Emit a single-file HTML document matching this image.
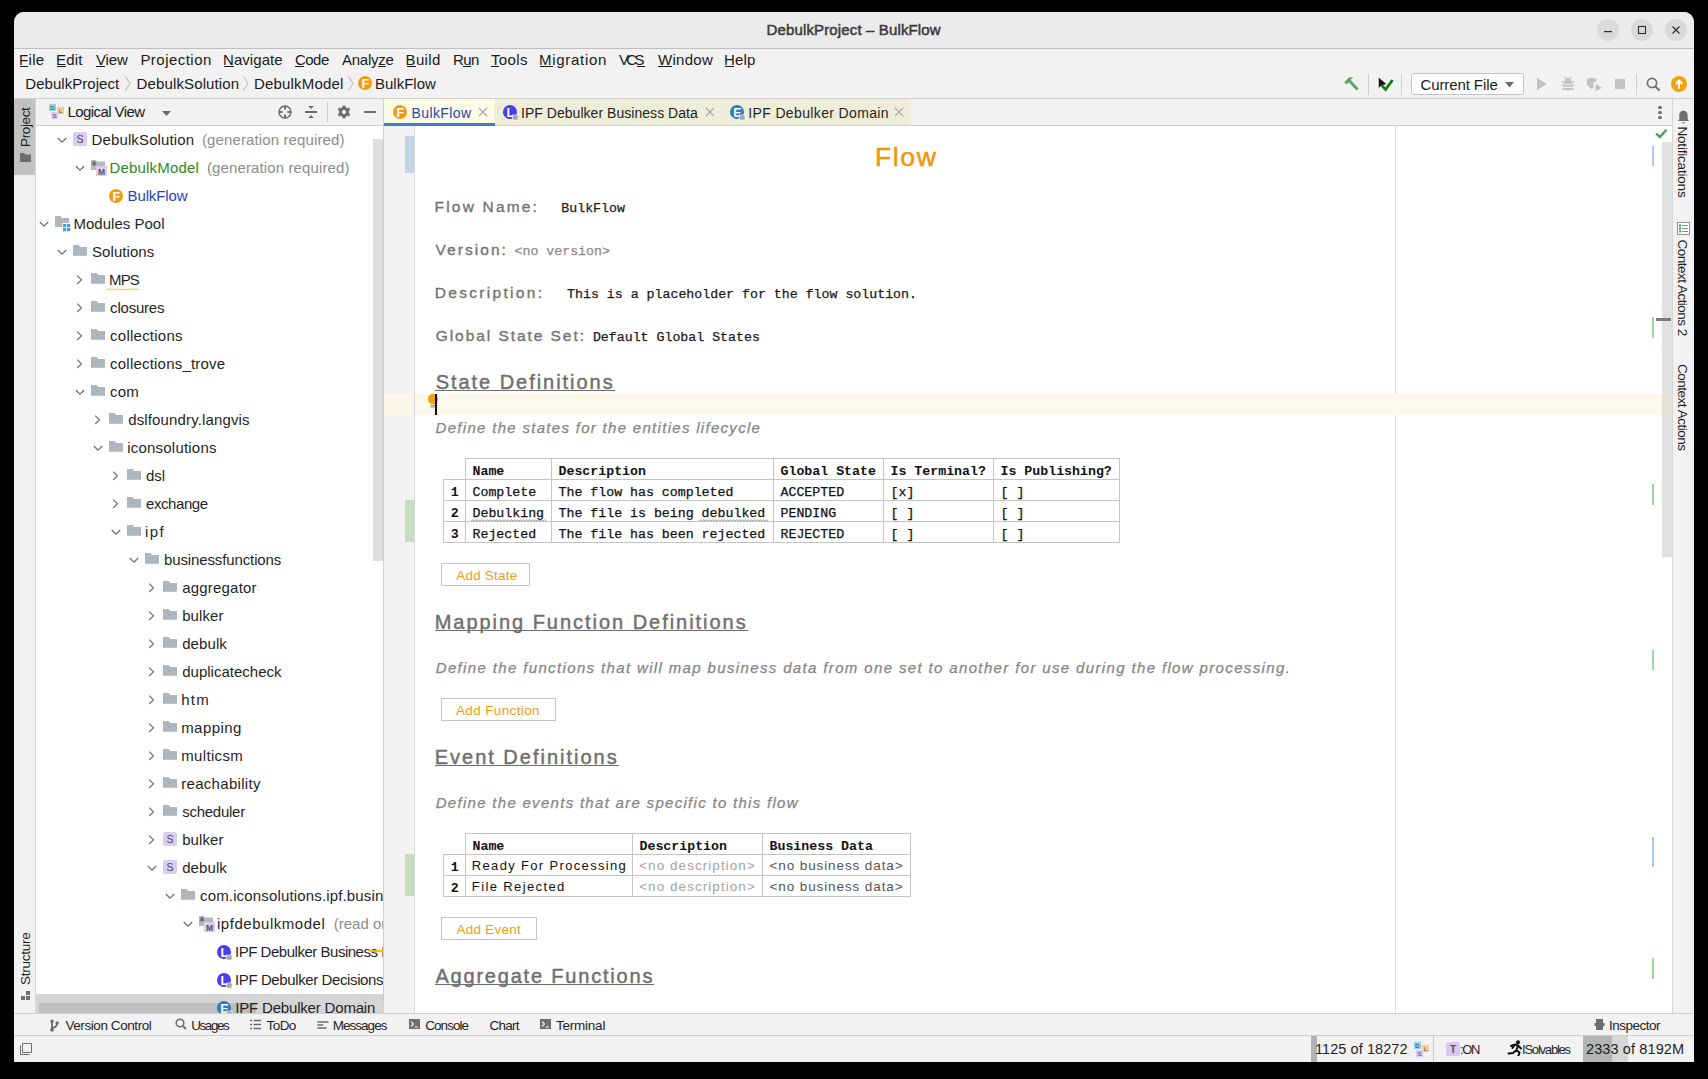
<!DOCTYPE html>
<html><head><meta charset="utf-8"><style>
html,body{margin:0;padding:0;}
body{width:1708px;height:1079px;background:#000;position:relative;overflow:hidden;font-family:"Liberation Sans",sans-serif;}
</style></head><body>
<div style="position:absolute;left:14px;top:12px;width:1680px;height:1050px;background:#f2f2f2;border-radius:10px 10px 0 0;overflow:hidden"></div>
<div style="position:absolute;left:14px;top:12px;width:1680px;height:36px;background:#ebebeb;border-radius:10px 10px 0 0"></div>
<div style="position:absolute;left:14px;top:48px;width:1680px;height:1px;background:#bebebe;"></div>
<div style="position:absolute;left:766.60px;top:22.00px;font-family:'Liberation Sans', sans-serif;font-size:15px;line-height:15px;color:#3a3a3a;font-weight:normal;font-style:normal;letter-spacing:0.136px;white-space:pre;-webkit-text-stroke:0.5px #3a3a3a;">DebulkProject – BulkFlow</div>
<svg style="position:absolute;left:1597px;top:19px;" width="22" height="22" viewBox="0 0 22 22"><circle cx="11" cy="11" r="11" fill="#dadada"/><rect x="7" y="12" width="8" height="1.2" fill="#2e2e2e"/></svg>
<svg style="position:absolute;left:1631px;top:19px;" width="22" height="22" viewBox="0 0 22 22"><circle cx="11" cy="11" r="11" fill="#dadada"/><rect x="7.5" y="7.5" width="7" height="7" fill="none" stroke="#2e2e2e" stroke-width="1.1"/></svg>
<svg style="position:absolute;left:1665px;top:19px;" width="22" height="22" viewBox="0 0 22 22"><circle cx="11" cy="11" r="11" fill="#dadada"/><path d="M7.5 7.5 L14.5 14.5 M14.5 7.5 L7.5 14.5" stroke="#2e2e2e" stroke-width="1.2"/></svg>
<div style="position:absolute;left:19.00px;top:52.00px;font-family:'Liberation Sans', sans-serif;font-size:15px;line-height:15px;color:#1a1a1a;font-weight:normal;font-style:normal;letter-spacing:0.324px;white-space:pre;">File</div>
<div style="position:absolute;left:56.00px;top:52.00px;font-family:'Liberation Sans', sans-serif;font-size:15px;line-height:15px;color:#1a1a1a;font-weight:normal;font-style:normal;letter-spacing:0.207px;white-space:pre;">Edit</div>
<div style="position:absolute;left:95.90px;top:52.00px;font-family:'Liberation Sans', sans-serif;font-size:15px;line-height:15px;color:#1a1a1a;font-weight:normal;font-style:normal;letter-spacing:-0.103px;white-space:pre;">View</div>
<div style="position:absolute;left:140.40px;top:52.00px;font-family:'Liberation Sans', sans-serif;font-size:15px;line-height:15px;color:#1a1a1a;font-weight:normal;font-style:normal;letter-spacing:0.471px;white-space:pre;">Projection</div>
<div style="position:absolute;left:223.00px;top:52.00px;font-family:'Liberation Sans', sans-serif;font-size:15px;line-height:15px;color:#1a1a1a;font-weight:normal;font-style:normal;letter-spacing:0.063px;white-space:pre;">Navigate</div>
<div style="position:absolute;left:294.90px;top:52.00px;font-family:'Liberation Sans', sans-serif;font-size:15px;line-height:15px;color:#1a1a1a;font-weight:normal;font-style:normal;letter-spacing:-0.472px;white-space:pre;">Code</div>
<div style="position:absolute;left:342.00px;top:52.00px;font-family:'Liberation Sans', sans-serif;font-size:15px;line-height:15px;color:#1a1a1a;font-weight:normal;font-style:normal;letter-spacing:-0.254px;white-space:pre;">Analyze</div>
<div style="position:absolute;left:405.60px;top:52.00px;font-family:'Liberation Sans', sans-serif;font-size:15px;line-height:15px;color:#1a1a1a;font-weight:normal;font-style:normal;letter-spacing:0.322px;white-space:pre;">Build</div>
<div style="position:absolute;left:453.00px;top:52.00px;font-family:'Liberation Sans', sans-serif;font-size:15px;line-height:15px;color:#1a1a1a;font-weight:normal;font-style:normal;letter-spacing:-0.587px;white-space:pre;">Run</div>
<div style="position:absolute;left:491.00px;top:52.00px;font-family:'Liberation Sans', sans-serif;font-size:15px;line-height:15px;color:#1a1a1a;font-weight:normal;font-style:normal;letter-spacing:0.371px;white-space:pre;">Tools</div>
<div style="position:absolute;left:539.00px;top:52.00px;font-family:'Liberation Sans', sans-serif;font-size:15px;line-height:15px;color:#1a1a1a;font-weight:normal;font-style:normal;letter-spacing:0.706px;white-space:pre;">Migration</div>
<div style="position:absolute;left:619.00px;top:52.00px;font-family:'Liberation Sans', sans-serif;font-size:15px;line-height:15px;color:#1a1a1a;font-weight:normal;font-style:normal;letter-spacing:-2.669px;white-space:pre;">VCS</div>
<div style="position:absolute;left:658.00px;top:52.00px;font-family:'Liberation Sans', sans-serif;font-size:15px;line-height:15px;color:#1a1a1a;font-weight:normal;font-style:normal;letter-spacing:0.297px;white-space:pre;">Window</div>
<div style="position:absolute;left:724.00px;top:52.00px;font-family:'Liberation Sans', sans-serif;font-size:15px;line-height:15px;color:#1a1a1a;font-weight:normal;font-style:normal;letter-spacing:0.164px;white-space:pre;">Help</div>
<div style="position:absolute;left:20px;top:66px;width:8px;height:1.2px;background:#1a1a1a;"></div>
<div style="position:absolute;left:57px;top:66px;width:9px;height:1.2px;background:#1a1a1a;"></div>
<div style="position:absolute;left:96px;top:66px;width:9px;height:1.2px;background:#1a1a1a;"></div>
<div style="position:absolute;left:224px;top:66px;width:10px;height:1.2px;background:#1a1a1a;"></div>
<div style="position:absolute;left:295px;top:66px;width:9px;height:1.2px;background:#1a1a1a;"></div>
<div style="position:absolute;left:378px;top:66px;width:8px;height:1.2px;background:#1a1a1a;"></div>
<div style="position:absolute;left:407px;top:66px;width:9px;height:1.2px;background:#1a1a1a;"></div>
<div style="position:absolute;left:463px;top:66px;width:8px;height:1.2px;background:#1a1a1a;"></div>
<div style="position:absolute;left:491px;top:66px;width:8px;height:1.2px;background:#1a1a1a;"></div>
<div style="position:absolute;left:540px;top:66px;width:13px;height:1.2px;background:#1a1a1a;"></div>
<div style="position:absolute;left:637px;top:66px;width:8px;height:1.2px;background:#1a1a1a;"></div>
<div style="position:absolute;left:658px;top:66px;width:14px;height:1.2px;background:#1a1a1a;"></div>
<div style="position:absolute;left:725px;top:66px;width:9px;height:1.2px;background:#1a1a1a;"></div>
<div style="position:absolute;left:25.30px;top:76.00px;font-family:'Liberation Sans', sans-serif;font-size:15px;line-height:15px;color:#1a1a1a;font-weight:normal;font-style:normal;letter-spacing:0.041px;white-space:pre;">DebulkProject</div>
<div style="position:absolute;left:136.60px;top:76.00px;font-family:'Liberation Sans', sans-serif;font-size:15px;line-height:15px;color:#1a1a1a;font-weight:normal;font-style:normal;letter-spacing:0.126px;white-space:pre;">DebulkSolution</div>
<div style="position:absolute;left:254.00px;top:76.00px;font-family:'Liberation Sans', sans-serif;font-size:15px;line-height:15px;color:#1a1a1a;font-weight:normal;font-style:normal;letter-spacing:0.179px;white-space:pre;">DebulkModel</div>
<div style="position:absolute;left:375.00px;top:76.00px;font-family:'Liberation Sans', sans-serif;font-size:15px;line-height:15px;color:#1a1a1a;font-weight:normal;font-style:normal;letter-spacing:-0.002px;white-space:pre;">BulkFlow</div>
<svg style="position:absolute;left:125px;top:76px;" width="6" height="15" viewBox="0 0 6 15"><path d="M0.5 0.5 L5 7.5 L0.5 14.5" fill="none" stroke="#b4b4b4" stroke-width="1"/></svg>
<svg style="position:absolute;left:243px;top:76px;" width="6" height="15" viewBox="0 0 6 15"><path d="M0.5 0.5 L5 7.5 L0.5 14.5" fill="none" stroke="#b4b4b4" stroke-width="1"/></svg>
<svg style="position:absolute;left:348px;top:76px;" width="6" height="15" viewBox="0 0 6 15"><path d="M0.5 0.5 L5 7.5 L0.5 14.5" fill="none" stroke="#b4b4b4" stroke-width="1"/></svg>
<div style="position:absolute;left:14px;top:98px;width:1680px;height:1px;background:#d0d0d0;"></div>
<div style="position:absolute;left:14px;top:99px;width:21px;height:914px;background:#f2f2f2;"></div>
<div style="position:absolute;left:14px;top:99px;width:21px;height:76px;background:#c2c2c2;"></div>
<div style="position:absolute;left:35px;top:99px;width:1px;height:914px;background:#d6d6d6;"></div>
<div style="position:absolute;left:36px;top:99px;width:347px;height:26px;background:#f2f2f2;"></div>
<div style="position:absolute;left:36px;top:125px;width:347px;height:1px;background:#d0d0d0;"></div>
<div style="position:absolute;left:67.50px;top:104.00px;font-family:'Liberation Sans', sans-serif;font-size:15px;line-height:15px;color:#1a1a1a;font-weight:normal;font-style:normal;letter-spacing:-0.574px;white-space:pre;">Logical View</div>
<svg style="position:absolute;left:162px;top:111px;" width="9" height="5" viewBox="0 0 9 5"><path d="M0 0 L9 0 L4.5 5 Z" fill="#6e6e6e"/></svg>
<div style="position:absolute;left:36px;top:126px;width:347px;height:887px;background:#ffffff;"></div>
<div style="position:absolute;left:383px;top:99px;width:1px;height:914px;background:#d0d0d0;"></div>
<div style="position:absolute;left:384px;top:99px;width:1288px;height:26px;background:#f2f2f2;"></div>
<div style="position:absolute;left:384px;top:125px;width:1288px;height:1px;background:#d0d0d0;"></div>
<div style="position:absolute;left:384px;top:99px;width:111px;height:26px;background:#fcfce6;"></div>
<div style="position:absolute;left:495px;top:99px;width:416px;height:26px;background:#eeedd8;"></div>
<div style="position:absolute;left:384px;top:123px;width:111px;height:3px;background:#3d7dd0;"></div>
<div style="position:absolute;left:384px;top:126px;width:1288px;height:887px;background:#ffffff;"></div>
<div style="position:absolute;left:384px;top:126px;width:30px;height:887px;background:#f2f2f2;"></div>
<div style="position:absolute;left:414px;top:126px;width:1px;height:887px;background:#d6d6d6;"></div>
<div style="position:absolute;left:1395px;top:126px;width:1px;height:887px;background:#dddddd;"></div>
<div style="position:absolute;left:1672px;top:99px;width:1px;height:914px;background:#d6d6d6;"></div>
<div style="position:absolute;left:1673px;top:99px;width:21px;height:914px;background:#f2f2f2;"></div>
<div style="position:absolute;left:14px;top:1013px;width:1680px;height:1px;background:#d0d0d0;"></div>
<div style="position:absolute;left:14px;top:1014px;width:1680px;height:21px;background:#f2f2f2;"></div>
<div style="position:absolute;left:14px;top:1035px;width:1680px;height:1px;background:#d0d0d0;"></div>
<div style="position:absolute;left:14px;top:1036px;width:1680px;height:26px;background:#f2f2f2;"></div>
<div style="position:absolute;left:36px;top:994px;width:347px;height:19px;background:#d5d5d5;"></div>
<div style="position:absolute;left:39px;top:1003px;width:217px;height:10px;background:#bebebe;"></div>
<div style="position:absolute;left:373px;top:139px;width:10px;height:422px;background:#dedede;"></div>
<div style="position:absolute;left:36px;top:126px;width:347px;height:887px;overflow:hidden">
<div style="position:absolute;left:-36px;top:-126px;width:1708px;height:1079px">
<svg style="position:absolute;left:57px;top:137px;" width="10" height="7" viewBox="0 0 10 7"><path d="M0.8 1 L5 5.2 L9.2 1" fill="none" stroke="#707070" stroke-width="1.3"/></svg>
<svg style="position:absolute;left:73px;top:132px;" width="14" height="14" viewBox="0 0 14 14"><rect x="0" y="0" width="14" height="14" rx="2" fill="#dccbf6"/><text x="7" y="10.8" text-anchor="middle" font-family="Liberation Sans" font-size="10.5" fill="#4a4a4a">S</text></svg>
<div style="position:absolute;left:91.50px;top:132.00px;font-family:'Liberation Sans', sans-serif;font-size:15px;line-height:15px;color:#1f1f1f;font-weight:normal;font-style:normal;letter-spacing:0.134px;white-space:pre;">DebulkSolution</div>
<svg style="position:absolute;left:75px;top:165px;" width="10" height="7" viewBox="0 0 10 7"><path d="M0.8 1 L5 5.2 L9.2 1" fill="none" stroke="#707070" stroke-width="1.3"/></svg>
<svg style="position:absolute;left:91px;top:160px;" width="16" height="16" viewBox="0 0 16 16"><path d="M0 0 H5 L6 1.5 H14 V10 H0 Z" fill="#b3b9be"/><path d="M3 1 V6 M0.8 2.2 L5.2 4.8 M5.2 2.2 L0.8 4.8" stroke="#555" stroke-width="0.9"/><rect x="5" y="6" width="11" height="10" fill="#dccbf6"/><text x="10.5" y="14.5" text-anchor="middle" font-family="Liberation Sans" font-size="8.5" font-weight="bold" fill="#555">M</text></svg>
<div style="position:absolute;left:109.50px;top:160.00px;font-family:'Liberation Sans', sans-serif;font-size:15px;line-height:15px;color:#2f8a1f;font-weight:normal;font-style:normal;letter-spacing:0.179px;white-space:pre;">DebulkModel</div>
<svg style="position:absolute;left:109px;top:189px;" width="16" height="16" viewBox="0 0 16 16"><circle cx="7" cy="7" r="7" fill="#f39c12"/><text x="7.4" y="11.6" text-anchor="middle" font-family="Liberation Sans" font-size="12.5" font-weight="bold" fill="#fff">F</text></svg>
<div style="position:absolute;left:127.50px;top:188.00px;font-family:'Liberation Sans', sans-serif;font-size:15px;line-height:15px;color:#2846b8;font-weight:normal;font-style:normal;letter-spacing:-0.102px;white-space:pre;">BulkFlow</div>
<svg style="position:absolute;left:39px;top:221px;" width="10" height="7" viewBox="0 0 10 7"><path d="M0.8 1 L5 5.2 L9.2 1" fill="none" stroke="#707070" stroke-width="1.3"/></svg>
<svg style="position:absolute;left:55px;top:216px;" width="16" height="16" viewBox="0 0 16 16"><path d="M0 0 H5.6 L7 2 H14 V11 H0 Z" fill="#adb6bd"/><rect x="7" y="7" width="9" height="9" fill="#fff"/><rect x="8" y="8" width="3.2" height="3.2" fill="#3aa1dd"/><rect x="12" y="8" width="3.2" height="3.2" fill="#3aa1dd"/><rect x="8" y="12" width="3.2" height="3.2" fill="#3aa1dd"/><rect x="12" y="12" width="3.2" height="3.2" fill="#3aa1dd"/></svg>
<div style="position:absolute;left:73.50px;top:216.00px;font-family:'Liberation Sans', sans-serif;font-size:15px;line-height:15px;color:#1f1f1f;font-weight:normal;font-style:normal;letter-spacing:0.013px;white-space:pre;">Modules Pool</div>
<svg style="position:absolute;left:57px;top:249px;" width="10" height="7" viewBox="0 0 10 7"><path d="M0.8 1 L5 5.2 L9.2 1" fill="none" stroke="#707070" stroke-width="1.3"/></svg>
<svg style="position:absolute;left:73px;top:245px;" width="14" height="11" viewBox="0 0 14 11"><path d="M0 0 H5.6 L7.2 2 H14 V10.8 H0 Z" fill="#adb6bd"/></svg>
<div style="position:absolute;left:92.00px;top:244.00px;font-family:'Liberation Sans', sans-serif;font-size:15px;line-height:15px;color:#1f1f1f;font-weight:normal;font-style:normal;letter-spacing:0.068px;white-space:pre;">Solutions</div>
<svg style="position:absolute;left:76px;top:275px;" width="7" height="10" viewBox="0 0 7 10"><path d="M1.2 0.6 L5.4 4.8 L1.2 9" fill="none" stroke="#757575" stroke-width="1.25"/></svg>
<svg style="position:absolute;left:91px;top:273px;" width="14" height="11" viewBox="0 0 14 11"><path d="M0 0 H5.6 L7.2 2 H14 V10.8 H0 Z" fill="#adb6bd"/></svg>
<div style="position:absolute;left:109.10px;top:272.00px;font-family:'Liberation Sans', sans-serif;font-size:15px;line-height:15px;color:#1f1f1f;font-weight:normal;font-style:normal;letter-spacing:-0.950px;white-space:pre;">MPS</div>
<svg style="position:absolute;left:76px;top:303px;" width="7" height="10" viewBox="0 0 7 10"><path d="M1.2 0.6 L5.4 4.8 L1.2 9" fill="none" stroke="#757575" stroke-width="1.25"/></svg>
<svg style="position:absolute;left:91px;top:301px;" width="14" height="11" viewBox="0 0 14 11"><path d="M0 0 H5.6 L7.2 2 H14 V10.8 H0 Z" fill="#adb6bd"/></svg>
<div style="position:absolute;left:110.10px;top:300.00px;font-family:'Liberation Sans', sans-serif;font-size:15px;line-height:15px;color:#1f1f1f;font-weight:normal;font-style:normal;letter-spacing:-0.208px;white-space:pre;">closures</div>
<svg style="position:absolute;left:76px;top:331px;" width="7" height="10" viewBox="0 0 7 10"><path d="M1.2 0.6 L5.4 4.8 L1.2 9" fill="none" stroke="#757575" stroke-width="1.25"/></svg>
<svg style="position:absolute;left:91px;top:329px;" width="14" height="11" viewBox="0 0 14 11"><path d="M0 0 H5.6 L7.2 2 H14 V10.8 H0 Z" fill="#adb6bd"/></svg>
<div style="position:absolute;left:110.10px;top:328.00px;font-family:'Liberation Sans', sans-serif;font-size:15px;line-height:15px;color:#1f1f1f;font-weight:normal;font-style:normal;letter-spacing:0.237px;white-space:pre;">collections</div>
<svg style="position:absolute;left:76px;top:359px;" width="7" height="10" viewBox="0 0 7 10"><path d="M1.2 0.6 L5.4 4.8 L1.2 9" fill="none" stroke="#757575" stroke-width="1.25"/></svg>
<svg style="position:absolute;left:91px;top:357px;" width="14" height="11" viewBox="0 0 14 11"><path d="M0 0 H5.6 L7.2 2 H14 V10.8 H0 Z" fill="#adb6bd"/></svg>
<div style="position:absolute;left:110.10px;top:356.00px;font-family:'Liberation Sans', sans-serif;font-size:15px;line-height:15px;color:#1f1f1f;font-weight:normal;font-style:normal;letter-spacing:0.207px;white-space:pre;">collections_trove</div>
<svg style="position:absolute;left:75px;top:389px;" width="10" height="7" viewBox="0 0 10 7"><path d="M0.8 1 L5 5.2 L9.2 1" fill="none" stroke="#707070" stroke-width="1.3"/></svg>
<svg style="position:absolute;left:91px;top:385px;" width="14" height="11" viewBox="0 0 14 11"><path d="M0 0 H5.6 L7.2 2 H14 V10.8 H0 Z" fill="#adb6bd"/></svg>
<div style="position:absolute;left:110.10px;top:384.00px;font-family:'Liberation Sans', sans-serif;font-size:15px;line-height:15px;color:#1f1f1f;font-weight:normal;font-style:normal;letter-spacing:0.129px;white-space:pre;">com</div>
<svg style="position:absolute;left:94px;top:415px;" width="7" height="10" viewBox="0 0 7 10"><path d="M1.2 0.6 L5.4 4.8 L1.2 9" fill="none" stroke="#757575" stroke-width="1.25"/></svg>
<svg style="position:absolute;left:109px;top:413px;" width="14" height="11" viewBox="0 0 14 11"><path d="M0 0 H5.6 L7.2 2 H14 V10.8 H0 Z" fill="#adb6bd"/></svg>
<div style="position:absolute;left:128.20px;top:412.00px;font-family:'Liberation Sans', sans-serif;font-size:15px;line-height:15px;color:#1f1f1f;font-weight:normal;font-style:normal;letter-spacing:0.138px;white-space:pre;">dslfoundry.langvis</div>
<svg style="position:absolute;left:93px;top:445px;" width="10" height="7" viewBox="0 0 10 7"><path d="M0.8 1 L5 5.2 L9.2 1" fill="none" stroke="#707070" stroke-width="1.3"/></svg>
<svg style="position:absolute;left:109px;top:441px;" width="14" height="11" viewBox="0 0 14 11"><path d="M0 0 H5.6 L7.2 2 H14 V10.8 H0 Z" fill="#adb6bd"/></svg>
<div style="position:absolute;left:127.20px;top:440.00px;font-family:'Liberation Sans', sans-serif;font-size:15px;line-height:15px;color:#1f1f1f;font-weight:normal;font-style:normal;letter-spacing:0.215px;white-space:pre;">iconsolutions</div>
<svg style="position:absolute;left:112px;top:471px;" width="7" height="10" viewBox="0 0 7 10"><path d="M1.2 0.6 L5.4 4.8 L1.2 9" fill="none" stroke="#757575" stroke-width="1.25"/></svg>
<svg style="position:absolute;left:127px;top:469px;" width="14" height="11" viewBox="0 0 14 11"><path d="M0 0 H5.6 L7.2 2 H14 V10.8 H0 Z" fill="#adb6bd"/></svg>
<div style="position:absolute;left:146.00px;top:468.00px;font-family:'Liberation Sans', sans-serif;font-size:15px;line-height:15px;color:#1f1f1f;font-weight:normal;font-style:normal;letter-spacing:-0.071px;white-space:pre;">dsl</div>
<svg style="position:absolute;left:112px;top:499px;" width="7" height="10" viewBox="0 0 7 10"><path d="M1.2 0.6 L5.4 4.8 L1.2 9" fill="none" stroke="#757575" stroke-width="1.25"/></svg>
<svg style="position:absolute;left:127px;top:497px;" width="14" height="11" viewBox="0 0 14 11"><path d="M0 0 H5.6 L7.2 2 H14 V10.8 H0 Z" fill="#adb6bd"/></svg>
<div style="position:absolute;left:146.00px;top:496.00px;font-family:'Liberation Sans', sans-serif;font-size:15px;line-height:15px;color:#1f1f1f;font-weight:normal;font-style:normal;letter-spacing:-0.416px;white-space:pre;">exchange</div>
<svg style="position:absolute;left:111px;top:529px;" width="10" height="7" viewBox="0 0 10 7"><path d="M0.8 1 L5 5.2 L9.2 1" fill="none" stroke="#707070" stroke-width="1.3"/></svg>
<svg style="position:absolute;left:127px;top:525px;" width="14" height="11" viewBox="0 0 14 11"><path d="M0 0 H5.6 L7.2 2 H14 V10.8 H0 Z" fill="#adb6bd"/></svg>
<div style="position:absolute;left:145.00px;top:524.00px;font-family:'Liberation Sans', sans-serif;font-size:15px;line-height:15px;color:#1f1f1f;font-weight:normal;font-style:normal;letter-spacing:1.413px;white-space:pre;">ipf</div>
<svg style="position:absolute;left:129px;top:557px;" width="10" height="7" viewBox="0 0 10 7"><path d="M0.8 1 L5 5.2 L9.2 1" fill="none" stroke="#707070" stroke-width="1.3"/></svg>
<svg style="position:absolute;left:145px;top:553px;" width="14" height="11" viewBox="0 0 14 11"><path d="M0 0 H5.6 L7.2 2 H14 V10.8 H0 Z" fill="#adb6bd"/></svg>
<div style="position:absolute;left:164.00px;top:552.00px;font-family:'Liberation Sans', sans-serif;font-size:15px;line-height:15px;color:#1f1f1f;font-weight:normal;font-style:normal;letter-spacing:-0.121px;white-space:pre;">businessfunctions</div>
<svg style="position:absolute;left:148px;top:583px;" width="7" height="10" viewBox="0 0 7 10"><path d="M1.2 0.6 L5.4 4.8 L1.2 9" fill="none" stroke="#757575" stroke-width="1.25"/></svg>
<svg style="position:absolute;left:163px;top:581px;" width="14" height="11" viewBox="0 0 14 11"><path d="M0 0 H5.6 L7.2 2 H14 V10.8 H0 Z" fill="#adb6bd"/></svg>
<div style="position:absolute;left:182.20px;top:580.00px;font-family:'Liberation Sans', sans-serif;font-size:15px;line-height:15px;color:#1f1f1f;font-weight:normal;font-style:normal;letter-spacing:0.205px;white-space:pre;">aggregator</div>
<svg style="position:absolute;left:148px;top:611px;" width="7" height="10" viewBox="0 0 7 10"><path d="M1.2 0.6 L5.4 4.8 L1.2 9" fill="none" stroke="#757575" stroke-width="1.25"/></svg>
<svg style="position:absolute;left:163px;top:609px;" width="14" height="11" viewBox="0 0 14 11"><path d="M0 0 H5.6 L7.2 2 H14 V10.8 H0 Z" fill="#adb6bd"/></svg>
<div style="position:absolute;left:182.20px;top:608.00px;font-family:'Liberation Sans', sans-serif;font-size:15px;line-height:15px;color:#1f1f1f;font-weight:normal;font-style:normal;letter-spacing:0.088px;white-space:pre;">bulker</div>
<svg style="position:absolute;left:148px;top:639px;" width="7" height="10" viewBox="0 0 7 10"><path d="M1.2 0.6 L5.4 4.8 L1.2 9" fill="none" stroke="#757575" stroke-width="1.25"/></svg>
<svg style="position:absolute;left:163px;top:637px;" width="14" height="11" viewBox="0 0 14 11"><path d="M0 0 H5.6 L7.2 2 H14 V10.8 H0 Z" fill="#adb6bd"/></svg>
<div style="position:absolute;left:182.20px;top:636.00px;font-family:'Liberation Sans', sans-serif;font-size:15px;line-height:15px;color:#1f1f1f;font-weight:normal;font-style:normal;letter-spacing:0.080px;white-space:pre;">debulk</div>
<svg style="position:absolute;left:148px;top:667px;" width="7" height="10" viewBox="0 0 7 10"><path d="M1.2 0.6 L5.4 4.8 L1.2 9" fill="none" stroke="#757575" stroke-width="1.25"/></svg>
<svg style="position:absolute;left:163px;top:665px;" width="14" height="11" viewBox="0 0 14 11"><path d="M0 0 H5.6 L7.2 2 H14 V10.8 H0 Z" fill="#adb6bd"/></svg>
<div style="position:absolute;left:182.20px;top:664.00px;font-family:'Liberation Sans', sans-serif;font-size:15px;line-height:15px;color:#1f1f1f;font-weight:normal;font-style:normal;letter-spacing:0.013px;white-space:pre;">duplicatecheck</div>
<svg style="position:absolute;left:148px;top:695px;" width="7" height="10" viewBox="0 0 7 10"><path d="M1.2 0.6 L5.4 4.8 L1.2 9" fill="none" stroke="#757575" stroke-width="1.25"/></svg>
<svg style="position:absolute;left:163px;top:693px;" width="14" height="11" viewBox="0 0 14 11"><path d="M0 0 H5.6 L7.2 2 H14 V10.8 H0 Z" fill="#adb6bd"/></svg>
<div style="position:absolute;left:181.20px;top:692.00px;font-family:'Liberation Sans', sans-serif;font-size:15px;line-height:15px;color:#1f1f1f;font-weight:normal;font-style:normal;letter-spacing:1.295px;white-space:pre;">htm</div>
<svg style="position:absolute;left:148px;top:723px;" width="7" height="10" viewBox="0 0 7 10"><path d="M1.2 0.6 L5.4 4.8 L1.2 9" fill="none" stroke="#757575" stroke-width="1.25"/></svg>
<svg style="position:absolute;left:163px;top:721px;" width="14" height="11" viewBox="0 0 14 11"><path d="M0 0 H5.6 L7.2 2 H14 V10.8 H0 Z" fill="#adb6bd"/></svg>
<div style="position:absolute;left:181.20px;top:720.00px;font-family:'Liberation Sans', sans-serif;font-size:15px;line-height:15px;color:#1f1f1f;font-weight:normal;font-style:normal;letter-spacing:0.434px;white-space:pre;">mapping</div>
<svg style="position:absolute;left:148px;top:751px;" width="7" height="10" viewBox="0 0 7 10"><path d="M1.2 0.6 L5.4 4.8 L1.2 9" fill="none" stroke="#757575" stroke-width="1.25"/></svg>
<svg style="position:absolute;left:163px;top:749px;" width="14" height="11" viewBox="0 0 14 11"><path d="M0 0 H5.6 L7.2 2 H14 V10.8 H0 Z" fill="#adb6bd"/></svg>
<div style="position:absolute;left:181.20px;top:748.00px;font-family:'Liberation Sans', sans-serif;font-size:15px;line-height:15px;color:#1f1f1f;font-weight:normal;font-style:normal;letter-spacing:0.347px;white-space:pre;">multicsm</div>
<svg style="position:absolute;left:148px;top:779px;" width="7" height="10" viewBox="0 0 7 10"><path d="M1.2 0.6 L5.4 4.8 L1.2 9" fill="none" stroke="#757575" stroke-width="1.25"/></svg>
<svg style="position:absolute;left:163px;top:777px;" width="14" height="11" viewBox="0 0 14 11"><path d="M0 0 H5.6 L7.2 2 H14 V10.8 H0 Z" fill="#adb6bd"/></svg>
<div style="position:absolute;left:181.20px;top:776.00px;font-family:'Liberation Sans', sans-serif;font-size:15px;line-height:15px;color:#1f1f1f;font-weight:normal;font-style:normal;letter-spacing:0.312px;white-space:pre;">reachability</div>
<svg style="position:absolute;left:148px;top:807px;" width="7" height="10" viewBox="0 0 7 10"><path d="M1.2 0.6 L5.4 4.8 L1.2 9" fill="none" stroke="#757575" stroke-width="1.25"/></svg>
<svg style="position:absolute;left:163px;top:805px;" width="14" height="11" viewBox="0 0 14 11"><path d="M0 0 H5.6 L7.2 2 H14 V10.8 H0 Z" fill="#adb6bd"/></svg>
<div style="position:absolute;left:182.20px;top:804.00px;font-family:'Liberation Sans', sans-serif;font-size:15px;line-height:15px;color:#1f1f1f;font-weight:normal;font-style:normal;letter-spacing:-0.255px;white-space:pre;">scheduler</div>
<svg style="position:absolute;left:148px;top:835px;" width="7" height="10" viewBox="0 0 7 10"><path d="M1.2 0.6 L5.4 4.8 L1.2 9" fill="none" stroke="#757575" stroke-width="1.25"/></svg>
<svg style="position:absolute;left:163px;top:832px;" width="14" height="14" viewBox="0 0 14 14"><rect x="0" y="0" width="14" height="14" rx="2" fill="#dccbf6"/><text x="7" y="10.8" text-anchor="middle" font-family="Liberation Sans" font-size="10.5" fill="#4a4a4a">S</text></svg>
<div style="position:absolute;left:182.20px;top:832.00px;font-family:'Liberation Sans', sans-serif;font-size:15px;line-height:15px;color:#1f1f1f;font-weight:normal;font-style:normal;letter-spacing:0.088px;white-space:pre;">bulker</div>
<svg style="position:absolute;left:147px;top:865px;" width="10" height="7" viewBox="0 0 10 7"><path d="M0.8 1 L5 5.2 L9.2 1" fill="none" stroke="#707070" stroke-width="1.3"/></svg>
<svg style="position:absolute;left:163px;top:860px;" width="14" height="14" viewBox="0 0 14 14"><rect x="0" y="0" width="14" height="14" rx="2" fill="#dccbf6"/><text x="7" y="10.8" text-anchor="middle" font-family="Liberation Sans" font-size="10.5" fill="#4a4a4a">S</text></svg>
<div style="position:absolute;left:182.20px;top:860.00px;font-family:'Liberation Sans', sans-serif;font-size:15px;line-height:15px;color:#1f1f1f;font-weight:normal;font-style:normal;letter-spacing:0.080px;white-space:pre;">debulk</div>
<svg style="position:absolute;left:165px;top:893px;" width="10" height="7" viewBox="0 0 10 7"><path d="M0.8 1 L5 5.2 L9.2 1" fill="none" stroke="#707070" stroke-width="1.3"/></svg>
<svg style="position:absolute;left:181px;top:889px;" width="14" height="11" viewBox="0 0 14 11"><path d="M0 0 H5.6 L7.2 2 H14 V10.8 H0 Z" fill="#adb6bd"/></svg>
<div style="position:absolute;left:200.00px;top:888.00px;font-family:'Liberation Sans', sans-serif;font-size:15px;line-height:15px;color:#1f1f1f;font-weight:normal;font-style:normal;letter-spacing:0.157px;white-space:pre;">com.iconsolutions.ipf.businessfunctions</div>
<svg style="position:absolute;left:183px;top:921px;" width="10" height="7" viewBox="0 0 10 7"><path d="M0.8 1 L5 5.2 L9.2 1" fill="none" stroke="#707070" stroke-width="1.3"/></svg>
<svg style="position:absolute;left:199px;top:916px;" width="16" height="16" viewBox="0 0 16 16"><path d="M0 0 H5 L6 1.5 H14 V10 H0 Z" fill="#b3b9be"/><path d="M3 1 V6 M0.8 2.2 L5.2 4.8 M5.2 2.2 L0.8 4.8" stroke="#555" stroke-width="0.9"/><rect x="5" y="6" width="11" height="10" fill="#dccbf6"/><text x="10.5" y="14.5" text-anchor="middle" font-family="Liberation Sans" font-size="8.5" font-weight="bold" fill="#555">M</text></svg>
<div style="position:absolute;left:217.00px;top:916.00px;font-family:'Liberation Sans', sans-serif;font-size:15px;line-height:15px;color:#1f1f1f;font-weight:normal;font-style:normal;letter-spacing:0.533px;white-space:pre;">ipfdebulkmodel</div>
<svg style="position:absolute;left:217px;top:945px;" width="16" height="16" viewBox="0 0 16 16"><circle cx="7" cy="7" r="7" fill="#4a3cf2"/><text x="7.4" y="11.6" text-anchor="middle" font-family="Liberation Sans" font-size="12.5" font-weight="bold" fill="#fff">L</text><rect x="9.5" y="10" width="5.5" height="5" fill="#a0a6ab" stroke="#fff" stroke-width="0.6"/></svg>
<div style="position:absolute;left:235.00px;top:944.00px;font-family:'Liberation Sans', sans-serif;font-size:15px;line-height:15px;color:#1f1f1f;font-weight:normal;font-style:normal;letter-spacing:-0.478px;white-space:pre;">IPF Debulker Business Data</div>
<svg style="position:absolute;left:217px;top:973px;" width="16" height="16" viewBox="0 0 16 16"><circle cx="7" cy="7" r="7" fill="#4a3cf2"/><text x="7.4" y="11.6" text-anchor="middle" font-family="Liberation Sans" font-size="12.5" font-weight="bold" fill="#fff">L</text><rect x="9.5" y="10" width="5.5" height="5" fill="#a0a6ab" stroke="#fff" stroke-width="0.6"/></svg>
<div style="position:absolute;left:235.00px;top:972.00px;font-family:'Liberation Sans', sans-serif;font-size:15px;line-height:15px;color:#1f1f1f;font-weight:normal;font-style:normal;letter-spacing:-0.392px;white-space:pre;">IPF Debulker Decisions</div>
<svg style="position:absolute;left:217px;top:1001px;" width="16" height="16" viewBox="0 0 16 16"><circle cx="7" cy="7" r="7" fill="#2d7bc6"/><text x="7.4" y="11.6" text-anchor="middle" font-family="Liberation Sans" font-size="12.5" font-weight="bold" fill="#fff">E</text><rect x="9.5" y="10" width="5.5" height="5" fill="#a0a6ab" stroke="#fff" stroke-width="0.6"/></svg>
<div style="position:absolute;left:235.25px;top:1000.00px;font-family:'Liberation Sans', sans-serif;font-size:15px;line-height:15px;color:#1f1f1f;font-weight:normal;font-style:normal;letter-spacing:-0.183px;white-space:pre;">IPF Debulker Domain</div>
<div style="position:absolute;left:202.00px;top:132.00px;font-family:'Liberation Sans', sans-serif;font-size:15px;line-height:15px;color:#8c8c8c;font-weight:normal;font-style:normal;letter-spacing:0.121px;white-space:pre;">(generation required)</div>
<div style="position:absolute;left:207.00px;top:160.00px;font-family:'Liberation Sans', sans-serif;font-size:15px;line-height:15px;color:#8c8c8c;font-weight:normal;font-style:normal;letter-spacing:0.121px;white-space:pre;">(generation required)</div>
<div style="position:absolute;left:333.75px;top:916.00px;font-family:'Liberation Sans', sans-serif;font-size:15px;line-height:15px;color:#8c8c8c;font-weight:normal;font-style:normal;white-space:pre;">(read only)</div>
</div></div>
<svg style="position:absolute;left:106px;top:288px;" width="35" height="3.5" viewBox="0 0 35 3.5"><path d="M0 2.2 L1.5 0.6 L3 2.2 L4.5 0.6 L6 2.2 L7.5 0.6 L9 2.2 L10.5 0.6 L12 2.2 L13.5 0.6 L15 2.2 L16.5 0.6 L18 2.2 L19.5 0.6 L21 2.2 L22.5 0.6 L24 2.2 L25.5 0.6 L27 2.2 L28.5 0.6 L30 2.2 L31.5 0.6 L33 2.2" fill="none" stroke="#e6c01a" stroke-width="0.9"/></svg>
<div style="position:absolute;left:369px;top:950px;width:14px;height:1.5px;background:#e6c01a;"></div>
<svg style="position:absolute;left:49px;top:104px;" width="16" height="16" viewBox="0 0 16 16"><rect x="0" y="0" width="7" height="7" fill="#8fd0ea"/><rect x="8" y="3" width="7" height="7" fill="#f6cf8a"/><rect x="2" y="8" width="7" height="7" fill="#d9c8f5"/><text x="3.5" y="6" text-anchor="middle" font-family="Liberation Sans" font-size="6" fill="#444">D</text><text x="11.5" y="9" text-anchor="middle" font-family="Liberation Sans" font-size="6" fill="#444">L</text><text x="5.5" y="14" text-anchor="middle" font-family="Liberation Sans" font-size="6" fill="#444">S</text></svg>
<svg style="position:absolute;left:278px;top:105px;" width="14" height="14" viewBox="0 0 14 14"><circle cx="7" cy="7" r="6" fill="none" stroke="#6e6e6e" stroke-width="1.5"/><path d="M7 1 V4.6 M7 9.4 V13 M1 7 H4.6 M9.4 7 H13" stroke="#6e6e6e" stroke-width="2"/></svg>
<svg style="position:absolute;left:304px;top:105px;" width="14" height="14" viewBox="0 0 14 14"><path d="M1 7 H13" stroke="#6e6e6e" stroke-width="2"/><path d="M4 1 H10 L7 4 Z M4 13 H10 L7 10 Z" fill="#6e6e6e"/></svg>
<div style="position:absolute;left:327px;top:102px;width:1px;height:20px;background:#d0d0d0;"></div>
<svg style="position:absolute;left:337px;top:105px;" width="14" height="14" viewBox="0 0 14 14"><path d="M4.50 2.67 L5.58 2.21 L5.68 0.53 L8.32 0.53 L8.42 2.21 L9.50 2.67 L10.44 3.37 L11.94 2.62 L13.26 4.91 L11.86 5.83 L12.00 7.00 L11.86 8.17 L13.26 9.09 L11.94 11.38 L10.44 10.63 L9.50 11.33 L8.42 11.79 L8.32 13.47 L5.68 13.47 L5.58 11.79 L4.50 11.33 L3.56 10.63 L2.06 11.38 L0.74 9.09 L2.14 8.17 L2.00 7.00 L2.14 5.83 L0.74 4.91 L2.06 2.62 L3.56 3.37 Z" fill="#6e6e6e"/><circle cx="7" cy="7" r="2.1" fill="#f2f2f2"/></svg>
<div style="position:absolute;left:364px;top:111px;width:12px;height:1.5px;background:#6e6e6e;"></div>
<div style="position:absolute;left:14px;top:99px;width:21px;height:76px;overflow:hidden"></div>
<div style="position:absolute;left:14px;top:146.2px;width:0;height:0;transform:rotate(-90deg);transform-origin:0 0">
<div style="position:absolute;left:-1.00px;top:4.75px;font-family:'Liberation Sans', sans-serif;font-size:13.5px;line-height:13.5px;color:#1f1f1f;font-weight:normal;font-style:normal;letter-spacing:-0.361px;white-space:pre;">Project</div>
</div>
<svg style="position:absolute;left:20px;top:153px;" width="11" height="9" viewBox="0 0 11 9"><path d="M0 0 H4.2 L5.6 1.6 H11 V9 H0 Z" fill="#6e6e6e"/></svg>
<div style="position:absolute;left:14px;top:984.8px;width:0;height:0;transform:rotate(-90deg);transform-origin:0 0">
<div style="position:absolute;left:0.00px;top:4.75px;font-family:'Liberation Sans', sans-serif;font-size:13.5px;line-height:13.5px;color:#1f1f1f;font-weight:normal;font-style:normal;letter-spacing:-0.245px;white-space:pre;">Structure</div>
</div>
<svg style="position:absolute;left:21px;top:991px;" width="10" height="10" viewBox="0 0 10 10"><rect x="5" y="0" width="4" height="4" fill="#6e6e6e"/><rect x="0" y="5" width="4" height="4" fill="#6e6e6e"/><rect x="5" y="5" width="4" height="4" fill="#6e6e6e"/></svg>
<svg style="position:absolute;left:393px;top:105px;" width="16" height="16" viewBox="0 0 16 16"><circle cx="7" cy="7" r="7" fill="#f39c12"/><text x="7.4" y="11.6" text-anchor="middle" font-family="Liberation Sans" font-size="12.5" font-weight="bold" fill="#fff">F</text></svg>
<div style="position:absolute;left:411.50px;top:106.00px;font-family:'Liberation Sans', sans-serif;font-size:14px;line-height:14px;color:#2846b8;font-weight:normal;font-style:normal;letter-spacing:0.402px;white-space:pre;">BulkFlow</div>
<svg style="position:absolute;left:478px;top:107px;" width="10" height="10" viewBox="0 0 10 10"><path d="M1 1 L9 9 M9 1 L1 9" stroke="#a8a8a8" stroke-width="1.1"/></svg>
<svg style="position:absolute;left:503px;top:105px;" width="16" height="16" viewBox="0 0 16 16"><circle cx="7" cy="7" r="7" fill="#4a3cf2"/><text x="7.4" y="11.6" text-anchor="middle" font-family="Liberation Sans" font-size="12.5" font-weight="bold" fill="#fff">L</text><rect x="9.5" y="10" width="5.5" height="5" fill="#a0a6ab" stroke="#fff" stroke-width="0.6"/></svg>
<div style="position:absolute;left:521.00px;top:106.00px;font-family:'Liberation Sans', sans-serif;font-size:14px;line-height:14px;color:#1f1f1f;font-weight:normal;font-style:normal;letter-spacing:0.037px;white-space:pre;">IPF Debulker Business Data</div>
<svg style="position:absolute;left:705px;top:107px;" width="10" height="10" viewBox="0 0 10 10"><path d="M1 1 L9 9 M9 1 L1 9" stroke="#a8a8a8" stroke-width="1.1"/></svg>
<svg style="position:absolute;left:730px;top:105px;" width="16" height="16" viewBox="0 0 16 16"><circle cx="7" cy="7" r="7" fill="#2d7bc6"/><text x="7.4" y="11.6" text-anchor="middle" font-family="Liberation Sans" font-size="12.5" font-weight="bold" fill="#fff">E</text><rect x="9.5" y="10" width="5.5" height="5" fill="#a0a6ab" stroke="#fff" stroke-width="0.6"/></svg>
<div style="position:absolute;left:748.30px;top:106.00px;font-family:'Liberation Sans', sans-serif;font-size:14px;line-height:14px;color:#1f1f1f;font-weight:normal;font-style:normal;letter-spacing:0.359px;white-space:pre;">IPF Debulker Domain</div>
<svg style="position:absolute;left:894px;top:107px;" width="10" height="10" viewBox="0 0 10 10"><path d="M1 1 L9 9 M9 1 L1 9" stroke="#a8a8a8" stroke-width="1.1"/></svg>
<div style="position:absolute;left:1658px;top:105.5px;width:3.5px;height:3.5px;border-radius:50%;background:#6e6e6e"></div>
<div style="position:absolute;left:1658px;top:110.5px;width:3.5px;height:3.5px;border-radius:50%;background:#6e6e6e"></div>
<div style="position:absolute;left:1658px;top:115.5px;width:3.5px;height:3.5px;border-radius:50%;background:#6e6e6e"></div>
<svg style="position:absolute;left:1343px;top:76px;" width="18" height="16" viewBox="0 0 18 16"><path d="M1.2 6.3 L6.2 1.2 L10.2 1.2 L7.6 3.9 L3.6 8.6 Z" fill="#59a869"/><path d="M6.2 4.5 L14.6 13.6" stroke="#59a869" stroke-width="3"/></svg>
<div style="position:absolute;left:1368px;top:74px;width:1px;height:21px;background:#cfcfcf;"></div>
<svg style="position:absolute;left:1377px;top:76px;" width="18" height="16" viewBox="0 0 18 16"><path d="M1.5 1.2 L1.5 12.5 L4.2 9.8 L9.8 8.2 Z" fill="#111" stroke="#fff" stroke-width="0.5"/><path d="M4.6 9.2 L8.6 13.6 L15.5 4" fill="none" stroke="#0b7d0b" stroke-width="2.7"/></svg>
<div style="position:absolute;left:1401px;top:74px;width:1px;height:21px;background:#cfcfcf;"></div>
<div style="position:absolute;left:1411px;top:73px;width:111px;height:20px;border:1px solid #c4c4c4;border-radius:3px;background:#fff"></div>
<div style="position:absolute;left:1420.40px;top:77.00px;font-family:'Liberation Sans', sans-serif;font-size:15px;line-height:15px;color:#1a1a1a;font-weight:normal;font-style:normal;letter-spacing:-0.092px;white-space:pre;">Current File</div>
<svg style="position:absolute;left:1505px;top:82px;" width="9" height="6" viewBox="0 0 9 6"><path d="M0 0 H9 L4.5 5.5 Z" fill="#6e6e6e"/></svg>
<svg style="position:absolute;left:1536px;top:77px;" width="12" height="14" viewBox="0 0 12 14"><path d="M1 1 L11 7 L1 13 Z" fill="#c2c2c2"/></svg>
<svg style="position:absolute;left:1561px;top:76px;" width="14" height="16" viewBox="0 0 14 16"><path d="M3.8 1 L5.2 3 M10.2 1 L8.8 3" stroke="#c2c2c2" stroke-width="1.3"/><circle cx="7" cy="4.3" r="2.6" fill="#c2c2c2"/><ellipse cx="7" cy="9.6" rx="4.3" ry="5" fill="#c2c2c2"/><path d="M0.8 5.8 H13.2 M0.8 9.4 H13.2 M0.8 13 H13.2" stroke="#c2c2c2" stroke-width="1.3"/><path d="M3.6 8.2 H10.4 M3.6 11.4 H10.4" stroke="#f2f2f2" stroke-width="1.1"/></svg>
<svg style="position:absolute;left:1586px;top:77px;" width="17" height="16" viewBox="0 0 17 16"><path d="M1 1.8 L6 0.8 L10.5 1.8 V5 L7.5 5 L7.5 11 L5.5 12 L1 8 Z" fill="#c2c2c2"/><path d="M9.5 7 L16 10.8 L9.5 14.6 Z" fill="#c2c2c2"/></svg>
<div style="position:absolute;left:1615px;top:79px;width:10px;height:10px;background:#c2c2c2;"></div>
<div style="position:absolute;left:1636px;top:74px;width:1px;height:21px;background:#cfcfcf;"></div>
<svg style="position:absolute;left:1646px;top:77px;" width="15" height="15" viewBox="0 0 15 15"><circle cx="6" cy="6" r="4.6" fill="none" stroke="#6e6e6e" stroke-width="1.7"/><path d="M9.3 9.3 L13.5 13.5" stroke="#6e6e6e" stroke-width="1.9"/></svg>
<svg style="position:absolute;left:1671px;top:76px;" width="16" height="16" viewBox="0 0 16 16"><circle cx="8" cy="8" r="8" fill="#f0a30a"/><path d="M8 12.5 V5 M4.8 8 L8 4.5 L11.2 8" fill="none" stroke="#fff" stroke-width="2"/></svg>
<svg style="position:absolute;left:358px;top:76px;" width="16" height="16" viewBox="0 0 16 16"><circle cx="7" cy="7" r="7" fill="#f39c12"/><text x="7.4" y="11.6" text-anchor="middle" font-family="Liberation Sans" font-size="12.5" font-weight="bold" fill="#fff">F</text></svg>
<div style="position:absolute;left:405px;top:136px;width:9px;height:37px;background:#c2d5e8;"></div>
<div style="position:absolute;left:405px;top:500px;width:9px;height:42px;background:#c7ddc0;"></div>
<div style="position:absolute;left:405px;top:854px;width:9px;height:42px;background:#c7ddc0;"></div>
<div style="position:absolute;left:384px;top:394px;width:30px;height:21px;background:#fbf8e9;"></div>
<div style="position:absolute;left:415px;top:394px;width:1257px;height:21px;background:#fbf9ec;"></div>
<div style="position:absolute;left:875.00px;top:143.75px;font-family:'Liberation Sans', sans-serif;font-size:26.5px;line-height:26.5px;color:#f0960a;font-weight:normal;font-style:normal;letter-spacing:1.629px;white-space:pre;-webkit-text-stroke:0.5px #f0960a;">Flow</div>
<div style="position:absolute;left:434.60px;top:198.75px;font-family:'Liberation Sans', sans-serif;font-size:15.5px;line-height:15.5px;color:#737373;font-weight:normal;font-style:normal;letter-spacing:2.180px;white-space:pre;-webkit-text-stroke:0.35px #737373">Flow Name:</div>
<div style="position:absolute;left:561.30px;top:201.88px;font-family:'Liberation Mono', monospace;font-size:13.25px;line-height:13.25px;color:#1a1a1a;font-weight:normal;font-style:normal;white-space:pre;-webkit-text-stroke:0.25px #1a1a1a;">BulkFlow</div>
<div style="position:absolute;left:435.60px;top:241.75px;font-family:'Liberation Sans', sans-serif;font-size:15.5px;line-height:15.5px;color:#737373;font-weight:normal;font-style:normal;letter-spacing:2.043px;white-space:pre;-webkit-text-stroke:0.35px #737373">Version:</div>
<div style="position:absolute;left:514.50px;top:244.88px;font-family:'Liberation Mono', monospace;font-size:13.25px;line-height:13.25px;color:#8a8a8a;font-weight:normal;font-style:normal;white-space:pre;-webkit-text-stroke:0.25px #8a8a8a;">&lt;no version&gt;</div>
<div style="position:absolute;left:434.70px;top:284.75px;font-family:'Liberation Sans', sans-serif;font-size:15.5px;line-height:15.5px;color:#737373;font-weight:normal;font-style:normal;letter-spacing:2.315px;white-space:pre;-webkit-text-stroke:0.35px #737373">Description:</div>
<div style="position:absolute;left:567.10px;top:287.88px;font-family:'Liberation Mono', monospace;font-size:13.25px;line-height:13.25px;color:#1a1a1a;font-weight:normal;font-style:normal;white-space:pre;-webkit-text-stroke:0.25px #1a1a1a;">This is a placeholder for the flow solution.</div>
<div style="position:absolute;left:435.70px;top:327.75px;font-family:'Liberation Sans', sans-serif;font-size:15.5px;line-height:15.5px;color:#737373;font-weight:normal;font-style:normal;letter-spacing:1.945px;white-space:pre;-webkit-text-stroke:0.35px #737373">Global State Set:</div>
<div style="position:absolute;left:592.90px;top:330.88px;font-family:'Liberation Mono', monospace;font-size:13.25px;line-height:13.25px;color:#1a1a1a;font-weight:normal;font-style:normal;white-space:pre;-webkit-text-stroke:0.25px #1a1a1a;">Default Global States</div>
<div style="position:absolute;left:435.70px;top:372.00px;font-family:'Liberation Sans', sans-serif;font-size:20px;line-height:20px;color:#6f6f6f;font-weight:normal;font-style:normal;letter-spacing:1.960px;white-space:pre;-webkit-text-stroke:0.45px #6f6f6f">State Definitions</div>
<div style="position:absolute;left:435.2px;top:390px;width:179.5px;height:1px;background:#6e6e6e;"></div>
<svg style="position:absolute;left:427px;top:393px;" width="12" height="18" viewBox="0 0 12 18"><circle cx="6" cy="6" r="5.2" fill="#f0a30a"/><path d="M3.5 12.5 H8 M3.5 14 H8" stroke="#777" stroke-width="0.8"/></svg>
<div style="position:absolute;left:435px;top:394px;width:2.2px;height:21px;background:#111;"></div>
<div style="position:absolute;left:435.60px;top:420.00px;font-family:'Liberation Sans', sans-serif;font-size:15px;line-height:15px;color:#858585;font-weight:normal;font-style:italic;letter-spacing:1.299px;white-space:pre;-webkit-text-stroke:0.25px #858585">Define the states for the entities lifecycle</div>
<div style="position:absolute;left:465px;top:458px;width:655px;height:1px;background:#c4c4c4;"></div>
<div style="position:absolute;left:443px;top:479px;width:677px;height:1px;background:#c4c4c4;"></div>
<div style="position:absolute;left:443px;top:500px;width:677px;height:1px;background:#c4c4c4;"></div>
<div style="position:absolute;left:443px;top:521px;width:677px;height:1px;background:#c4c4c4;"></div>
<div style="position:absolute;left:443px;top:542px;width:677px;height:1px;background:#c4c4c4;"></div>
<div style="position:absolute;left:443px;top:479px;width:1px;height:64px;background:#c4c4c4;"></div>
<div style="position:absolute;left:465px;top:458px;width:1px;height:85px;background:#c4c4c4;"></div>
<div style="position:absolute;left:551px;top:458px;width:1px;height:85px;background:#c4c4c4;"></div>
<div style="position:absolute;left:773px;top:458px;width:1px;height:85px;background:#c4c4c4;"></div>
<div style="position:absolute;left:883px;top:458px;width:1px;height:85px;background:#c4c4c4;"></div>
<div style="position:absolute;left:993px;top:458px;width:1px;height:85px;background:#c4c4c4;"></div>
<div style="position:absolute;left:1119px;top:458px;width:1px;height:85px;background:#c4c4c4;"></div>
<div style="position:absolute;left:472.50px;top:464.88px;font-family:'Liberation Mono', monospace;font-size:13.25px;line-height:13.25px;color:#111;font-weight:bold;font-style:normal;white-space:pre;">Name</div>
<div style="position:absolute;left:558.50px;top:464.88px;font-family:'Liberation Mono', monospace;font-size:13.25px;line-height:13.25px;color:#111;font-weight:bold;font-style:normal;white-space:pre;">Description</div>
<div style="position:absolute;left:780.50px;top:464.88px;font-family:'Liberation Mono', monospace;font-size:13.25px;line-height:13.25px;color:#111;font-weight:bold;font-style:normal;white-space:pre;">Global State</div>
<div style="position:absolute;left:890.50px;top:464.88px;font-family:'Liberation Mono', monospace;font-size:13.25px;line-height:13.25px;color:#111;font-weight:bold;font-style:normal;white-space:pre;">Is Terminal?</div>
<div style="position:absolute;left:1000.50px;top:464.88px;font-family:'Liberation Mono', monospace;font-size:13.25px;line-height:13.25px;color:#111;font-weight:bold;font-style:normal;white-space:pre;">Is Publishing?</div>
<div style="position:absolute;left:450.80px;top:485.88px;font-family:'Liberation Mono', monospace;font-size:13.25px;line-height:13.25px;color:#111;font-weight:bold;font-style:normal;white-space:pre;">1</div>
<div style="position:absolute;left:472.50px;top:485.88px;font-family:'Liberation Mono', monospace;font-size:13.25px;line-height:13.25px;color:#111;font-weight:normal;font-style:normal;white-space:pre;-webkit-text-stroke:0.25px #111;">Complete</div>
<div style="position:absolute;left:558.50px;top:485.88px;font-family:'Liberation Mono', monospace;font-size:13.25px;line-height:13.25px;color:#111;font-weight:normal;font-style:normal;white-space:pre;-webkit-text-stroke:0.25px #111;">The flow has completed</div>
<div style="position:absolute;left:780.50px;top:485.88px;font-family:'Liberation Mono', monospace;font-size:13.25px;line-height:13.25px;color:#111;font-weight:normal;font-style:normal;white-space:pre;-webkit-text-stroke:0.25px #111;">ACCEPTED</div>
<div style="position:absolute;left:890.50px;top:485.88px;font-family:'Liberation Mono', monospace;font-size:13.25px;line-height:13.25px;color:#111;font-weight:normal;font-style:normal;white-space:pre;-webkit-text-stroke:0.25px #111;">[x]</div>
<div style="position:absolute;left:1000.50px;top:485.88px;font-family:'Liberation Mono', monospace;font-size:13.25px;line-height:13.25px;color:#111;font-weight:normal;font-style:normal;white-space:pre;-webkit-text-stroke:0.25px #111;">[ ]</div>
<div style="position:absolute;left:450.80px;top:506.88px;font-family:'Liberation Mono', monospace;font-size:13.25px;line-height:13.25px;color:#111;font-weight:bold;font-style:normal;white-space:pre;">2</div>
<div style="position:absolute;left:472.50px;top:506.88px;font-family:'Liberation Mono', monospace;font-size:13.25px;line-height:13.25px;color:#111;font-weight:normal;font-style:normal;white-space:pre;-webkit-text-stroke:0.25px #111;">Debulking</div>
<div style="position:absolute;left:558.50px;top:506.88px;font-family:'Liberation Mono', monospace;font-size:13.25px;line-height:13.25px;color:#111;font-weight:normal;font-style:normal;white-space:pre;-webkit-text-stroke:0.25px #111;">The file is being debulked</div>
<div style="position:absolute;left:780.50px;top:506.88px;font-family:'Liberation Mono', monospace;font-size:13.25px;line-height:13.25px;color:#111;font-weight:normal;font-style:normal;white-space:pre;-webkit-text-stroke:0.25px #111;">PENDING</div>
<div style="position:absolute;left:890.50px;top:506.88px;font-family:'Liberation Mono', monospace;font-size:13.25px;line-height:13.25px;color:#111;font-weight:normal;font-style:normal;white-space:pre;-webkit-text-stroke:0.25px #111;">[ ]</div>
<div style="position:absolute;left:1000.50px;top:506.88px;font-family:'Liberation Mono', monospace;font-size:13.25px;line-height:13.25px;color:#111;font-weight:normal;font-style:normal;white-space:pre;-webkit-text-stroke:0.25px #111;">[ ]</div>
<div style="position:absolute;left:450.80px;top:527.88px;font-family:'Liberation Mono', monospace;font-size:13.25px;line-height:13.25px;color:#111;font-weight:bold;font-style:normal;white-space:pre;">3</div>
<div style="position:absolute;left:472.50px;top:527.88px;font-family:'Liberation Mono', monospace;font-size:13.25px;line-height:13.25px;color:#111;font-weight:normal;font-style:normal;white-space:pre;-webkit-text-stroke:0.25px #111;">Rejected</div>
<div style="position:absolute;left:558.50px;top:527.88px;font-family:'Liberation Mono', monospace;font-size:13.25px;line-height:13.25px;color:#111;font-weight:normal;font-style:normal;white-space:pre;-webkit-text-stroke:0.25px #111;">The file has been rejected</div>
<div style="position:absolute;left:780.50px;top:527.88px;font-family:'Liberation Mono', monospace;font-size:13.25px;line-height:13.25px;color:#111;font-weight:normal;font-style:normal;white-space:pre;-webkit-text-stroke:0.25px #111;">REJECTED</div>
<div style="position:absolute;left:890.50px;top:527.88px;font-family:'Liberation Mono', monospace;font-size:13.25px;line-height:13.25px;color:#111;font-weight:normal;font-style:normal;white-space:pre;-webkit-text-stroke:0.25px #111;">[ ]</div>
<div style="position:absolute;left:1000.50px;top:527.88px;font-family:'Liberation Mono', monospace;font-size:13.25px;line-height:13.25px;color:#111;font-weight:normal;font-style:normal;white-space:pre;-webkit-text-stroke:0.25px #111;">[ ]</div>
<div style="position:absolute;left:441px;top:563px;width:87px;height:21px;border:1px solid #c4c4c4;background:#fff"></div>
<div style="position:absolute;left:456.20px;top:568.75px;font-family:'Liberation Sans', sans-serif;font-size:13.5px;line-height:13.5px;color:#f39c12;font-weight:normal;font-style:normal;letter-spacing:0.227px;white-space:pre;">Add State</div>
<div style="position:absolute;left:434.70px;top:612.00px;font-family:'Liberation Sans', sans-serif;font-size:20px;line-height:20px;color:#6f6f6f;font-weight:normal;font-style:normal;letter-spacing:1.966px;white-space:pre;-webkit-text-stroke:0.45px #6f6f6f">Mapping Function Definitions</div>
<div style="position:absolute;left:435.2px;top:630px;width:312.5px;height:1px;background:#6e6e6e;"></div>
<div style="position:absolute;left:435.70px;top:660.00px;font-family:'Liberation Sans', sans-serif;font-size:15px;line-height:15px;color:#858585;font-weight:normal;font-style:italic;letter-spacing:1.359px;white-space:pre;-webkit-text-stroke:0.25px #858585">Define the functions that will map business data from one set to another for use during the flow processing.</div>
<div style="position:absolute;left:441px;top:698px;width:113px;height:21px;border:1px solid #c4c4c4;background:#fff"></div>
<div style="position:absolute;left:456.00px;top:703.75px;font-family:'Liberation Sans', sans-serif;font-size:13.5px;line-height:13.5px;color:#f39c12;font-weight:normal;font-style:normal;letter-spacing:0.360px;white-space:pre;">Add Function</div>
<div style="position:absolute;left:434.70px;top:747.00px;font-family:'Liberation Sans', sans-serif;font-size:20px;line-height:20px;color:#6f6f6f;font-weight:normal;font-style:normal;letter-spacing:1.995px;white-space:pre;-webkit-text-stroke:0.45px #6f6f6f">Event Definitions</div>
<div style="position:absolute;left:435.2px;top:765px;width:183.5px;height:1px;background:#6e6e6e;"></div>
<div style="position:absolute;left:435.70px;top:795.00px;font-family:'Liberation Sans', sans-serif;font-size:15px;line-height:15px;color:#858585;font-weight:normal;font-style:italic;letter-spacing:1.295px;white-space:pre;-webkit-text-stroke:0.25px #858585">Define the events that are specific to this flow</div>
<div style="position:absolute;left:465px;top:833px;width:446px;height:1px;background:#c4c4c4;"></div>
<div style="position:absolute;left:443px;top:854px;width:468px;height:1px;background:#c4c4c4;"></div>
<div style="position:absolute;left:443px;top:875px;width:468px;height:1px;background:#c4c4c4;"></div>
<div style="position:absolute;left:443px;top:896px;width:468px;height:1px;background:#c4c4c4;"></div>
<div style="position:absolute;left:443px;top:854px;width:1px;height:43px;background:#c4c4c4;"></div>
<div style="position:absolute;left:465px;top:833px;width:1px;height:64px;background:#c4c4c4;"></div>
<div style="position:absolute;left:632px;top:833px;width:1px;height:64px;background:#c4c4c4;"></div>
<div style="position:absolute;left:762px;top:833px;width:1px;height:64px;background:#c4c4c4;"></div>
<div style="position:absolute;left:910px;top:833px;width:1px;height:64px;background:#c4c4c4;"></div>
<div style="position:absolute;left:472.50px;top:839.88px;font-family:'Liberation Mono', monospace;font-size:13.25px;line-height:13.25px;color:#111;font-weight:bold;font-style:normal;white-space:pre;">Name</div>
<div style="position:absolute;left:639.50px;top:839.88px;font-family:'Liberation Mono', monospace;font-size:13.25px;line-height:13.25px;color:#111;font-weight:bold;font-style:normal;white-space:pre;">Description</div>
<div style="position:absolute;left:769.50px;top:839.88px;font-family:'Liberation Mono', monospace;font-size:13.25px;line-height:13.25px;color:#111;font-weight:bold;font-style:normal;white-space:pre;">Business Data</div>
<div style="position:absolute;left:450.80px;top:860.88px;font-family:'Liberation Mono', monospace;font-size:13.25px;line-height:13.25px;color:#111;font-weight:bold;font-style:normal;white-space:pre;">1</div>
<div style="position:absolute;left:471.80px;top:859.00px;font-family:'Liberation Sans', sans-serif;font-size:13px;line-height:13px;color:#111;font-weight:normal;font-style:normal;letter-spacing:1.338px;white-space:pre;">Ready For Processing</div>
<div style="position:absolute;left:639.20px;top:858.75px;font-family:'Liberation Sans', sans-serif;font-size:13.5px;line-height:13.5px;color:#a3a3a3;font-weight:normal;font-style:normal;letter-spacing:1.051px;white-space:pre;">&lt;no description&gt;</div>
<div style="position:absolute;left:769.50px;top:858.75px;font-family:'Liberation Sans', sans-serif;font-size:13.5px;line-height:13.5px;color:#555555;font-weight:normal;font-style:normal;letter-spacing:0.897px;white-space:pre;">&lt;no business data&gt;</div>
<div style="position:absolute;left:450.80px;top:881.88px;font-family:'Liberation Mono', monospace;font-size:13.25px;line-height:13.25px;color:#111;font-weight:bold;font-style:normal;white-space:pre;">2</div>
<div style="position:absolute;left:471.80px;top:880.00px;font-family:'Liberation Sans', sans-serif;font-size:13px;line-height:13px;color:#111;font-weight:normal;font-style:normal;letter-spacing:1.389px;white-space:pre;">File Rejected</div>
<div style="position:absolute;left:639.20px;top:879.75px;font-family:'Liberation Sans', sans-serif;font-size:13.5px;line-height:13.5px;color:#a3a3a3;font-weight:normal;font-style:normal;letter-spacing:1.051px;white-space:pre;">&lt;no description&gt;</div>
<div style="position:absolute;left:769.50px;top:879.75px;font-family:'Liberation Sans', sans-serif;font-size:13.5px;line-height:13.5px;color:#555555;font-weight:normal;font-style:normal;letter-spacing:0.897px;white-space:pre;">&lt;no business data&gt;</div>
<div style="position:absolute;left:441px;top:917px;width:94px;height:21px;border:1px solid #c4c4c4;background:#fff"></div>
<div style="position:absolute;left:456.40px;top:922.75px;font-family:'Liberation Sans', sans-serif;font-size:13.5px;line-height:13.5px;color:#f39c12;font-weight:normal;font-style:normal;letter-spacing:0.257px;white-space:pre;">Add Event</div>
<div style="position:absolute;left:435.40px;top:966.00px;font-family:'Liberation Sans', sans-serif;font-size:20px;line-height:20px;color:#6f6f6f;font-weight:normal;font-style:normal;letter-spacing:1.802px;white-space:pre;-webkit-text-stroke:0.45px #6f6f6f">Aggregate Functions</div>
<div style="position:absolute;left:434.9px;top:984px;width:219.5px;height:1px;background:#6e6e6e;"></div>
<svg style="position:absolute;left:1655px;top:128px;" width="13" height="11" viewBox="0 0 13 11"><path d="M1.2 5.5 L4.8 9 L11.5 1.8" fill="none" stroke="#4a9c5a" stroke-width="2.4"/></svg>
<div style="position:absolute;left:1662px;top:142px;width:10px;height:415px;background:#e0e0e0;"></div>
<div style="position:absolute;left:1652px;top:146px;width:2px;height:20px;background:#a9c9f0;"></div>
<div style="position:absolute;left:1652px;top:317px;width:2px;height:21px;background:#9ed69e;"></div>
<div style="position:absolute;left:1656px;top:318px;width:15px;height:2.5px;background:#7a7a7a;"></div>
<div style="position:absolute;left:1652px;top:484px;width:2px;height:21px;background:#9ed69e;"></div>
<div style="position:absolute;left:1652px;top:650px;width:2px;height:20px;background:#9ed69e;"></div>
<div style="position:absolute;left:1652px;top:837px;width:2px;height:30px;background:#a9c9f0;"></div>
<div style="position:absolute;left:1652px;top:958px;width:2px;height:21px;background:#9ed69e;"></div>
<svg style="position:absolute;left:1677px;top:110px;" width="13" height="14" viewBox="0 0 13 14"><path d="M6.5 0.8 C3.6 0.8 2.3 3 2.3 6 V9.5 L0.8 11 H12.2 L10.7 9.5 V6 C10.7 3 9.4 0.8 6.5 0.8 Z" fill="#6e6e6e"/><path d="M4.8 12.3 H8.2 L6.5 13.8 Z" fill="#6e6e6e"/></svg>
<div style="position:absolute;left:1694px;top:0px;width:0;height:0;transform:rotate(90deg);transform-origin:0 0">
<div style="position:absolute;left:126.50px;top:4.75px;font-family:'Liberation Sans', sans-serif;font-size:13.5px;line-height:13.5px;color:#1f1f1f;font-weight:normal;font-style:normal;letter-spacing:-0.198px;white-space:pre;">Notifications</div>
</div>
<svg style="position:absolute;left:1677px;top:222px;" width="13" height="13" viewBox="0 0 13 13"><rect x="0.5" y="0.5" width="12" height="12" fill="#fff" stroke="#7a7a7a" stroke-width="0.8"/><rect x="2" y="2.5" width="2" height="2" fill="#3c9a4a"/><rect x="2" y="5.5" width="2" height="2" fill="#3c9a4a"/><rect x="2" y="8.5" width="2" height="2" fill="#3c9a4a"/><path d="M5 3.5 H11 M5 6.5 H11 M5 9.5 H11" stroke="#7a7a7a" stroke-width="0.9"/></svg>
<div style="position:absolute;left:1694px;top:0px;width:0;height:0;transform:rotate(90deg);transform-origin:0 0">
<div style="position:absolute;left:239.60px;top:4.75px;font-family:'Liberation Sans', sans-serif;font-size:13.5px;line-height:13.5px;color:#1f1f1f;font-weight:normal;font-style:normal;letter-spacing:-0.525px;white-space:pre;">Context Actions 2</div>
</div>
<div style="position:absolute;left:1694px;top:0px;width:0;height:0;transform:rotate(90deg);transform-origin:0 0">
<div style="position:absolute;left:364.00px;top:4.75px;font-family:'Liberation Sans', sans-serif;font-size:13.5px;line-height:13.5px;color:#1f1f1f;font-weight:normal;font-style:normal;letter-spacing:-0.485px;white-space:pre;">Context Actions</div>
</div>
<div style="position:absolute;left:65.40px;top:1018.75px;font-family:'Liberation Sans', sans-serif;font-size:13.5px;line-height:13.5px;color:#1f1f1f;font-weight:normal;font-style:normal;letter-spacing:-0.421px;white-space:pre;">Version Control</div>
<svg style="position:absolute;left:48px;top:1018px;" width="12" height="15" viewBox="0 0 12 15"><circle cx="4" cy="3.3" r="1.8" fill="#6e6e6e"/><circle cx="4" cy="11.8" r="1.9" fill="#6e6e6e"/><circle cx="9.1" cy="5" r="1.8" fill="#6e6e6e"/><path d="M4 3 V12 M9.1 5 C9.1 8.6 6.5 9.6 4 9.6" fill="none" stroke="#6e6e6e" stroke-width="1.8"/></svg>
<div style="position:absolute;left:191.30px;top:1018.75px;font-family:'Liberation Sans', sans-serif;font-size:13.5px;line-height:13.5px;color:#1f1f1f;font-weight:normal;font-style:normal;letter-spacing:-1.465px;white-space:pre;">Usages</div>
<svg style="position:absolute;left:175px;top:1018px;" width="12" height="13" viewBox="0 0 12 13"><circle cx="5" cy="5" r="3.8" fill="none" stroke="#6e6e6e" stroke-width="1.6"/><path d="M7.8 7.8 L11 11" stroke="#6e6e6e" stroke-width="1.8"/></svg>
<div style="position:absolute;left:266.60px;top:1018.75px;font-family:'Liberation Sans', sans-serif;font-size:13.5px;line-height:13.5px;color:#1f1f1f;font-weight:normal;font-style:normal;letter-spacing:-0.602px;white-space:pre;">ToDo</div>
<svg style="position:absolute;left:250px;top:1019px;" width="12" height="11" viewBox="0 0 12 11"><path d="M0 1.5 H2 M0 5.5 H2 M0 9.5 H2 M3.5 1.5 H11 M3.5 5.5 H11 M3.5 9.5 H11" stroke="#6e6e6e" stroke-width="1.5"/></svg>
<div style="position:absolute;left:332.70px;top:1018.75px;font-family:'Liberation Sans', sans-serif;font-size:13.5px;line-height:13.5px;color:#1f1f1f;font-weight:normal;font-style:normal;letter-spacing:-0.968px;white-space:pre;">Messages</div>
<svg style="position:absolute;left:317px;top:1019px;" width="12" height="11" viewBox="0 0 12 11"><path d="M0.9 3 H10.8 M0.9 6 H5.6 M0.9 9 H9" stroke="#6e6e6e" stroke-width="1.6" stroke-linecap="round"/></svg>
<div style="position:absolute;left:425.30px;top:1018.75px;font-family:'Liberation Sans', sans-serif;font-size:13.5px;line-height:13.5px;color:#1f1f1f;font-weight:normal;font-style:normal;letter-spacing:-0.970px;white-space:pre;">Console</div>
<svg style="position:absolute;left:409px;top:1019px;" width="12" height="11" viewBox="0 0 12 11"><rect x="0" y="0" width="11" height="10" fill="#6e6e6e"/><path d="M2 2.5 L4.5 5 L2 7.5 M5.5 8 H9" fill="none" stroke="#f2f2f2" stroke-width="1.1"/></svg>
<div style="position:absolute;left:489.40px;top:1018.75px;font-family:'Liberation Sans', sans-serif;font-size:13.5px;line-height:13.5px;color:#1f1f1f;font-weight:normal;font-style:normal;letter-spacing:-0.740px;white-space:pre;">Chart</div>
<div style="position:absolute;left:556.00px;top:1018.75px;font-family:'Liberation Sans', sans-serif;font-size:13.5px;line-height:13.5px;color:#1f1f1f;font-weight:normal;font-style:normal;letter-spacing:-0.231px;white-space:pre;">Terminal</div>
<svg style="position:absolute;left:540px;top:1019px;" width="12" height="11" viewBox="0 0 12 11"><rect x="0" y="0" width="11" height="10" fill="#6e6e6e"/><path d="M2 2.5 L4.5 5 L2 7.5 M5.5 8 H9" fill="none" stroke="#f2f2f2" stroke-width="1.1"/></svg>
<div style="position:absolute;left:1609.00px;top:1018.75px;font-family:'Liberation Sans', sans-serif;font-size:13.5px;line-height:13.5px;color:#1f1f1f;font-weight:normal;font-style:normal;letter-spacing:-0.504px;white-space:pre;">Inspector</div>
<svg style="position:absolute;left:1594px;top:1018px;" width="11" height="13" viewBox="0 0 11 13"><path d="M2 1 H9 V5 H10.5 V8 H9 V12 H2 V8 H0.5 V5 H2 Z" fill="#6e6e6e"/></svg>
<svg style="position:absolute;left:20px;top:1043px;" width="12" height="12" viewBox="0 0 12 12"><path d="M2.5 0.5 H11.5 V9.5 H2.5 Z" fill="none" stroke="#6e6e6e" stroke-width="1"/><path d="M0.5 2.5 V11.5 H9.5" fill="none" stroke="#6e6e6e" stroke-width="1"/></svg>
<div style="position:absolute;left:1311px;top:1036px;width:6px;height:26px;background:#b3b3b3;"></div>
<div style="position:absolute;left:1315.00px;top:1041.75px;font-family:'Liberation Sans', sans-serif;font-size:14.5px;line-height:14.5px;color:#1f1f1f;font-weight:normal;font-style:normal;letter-spacing:0.076px;white-space:pre;">1125 of 18272</div>
<svg style="position:absolute;left:1414px;top:1042px;" width="16" height="16" viewBox="0 0 16 16"><rect x="0" y="0" width="7" height="7" fill="#8fd0ea"/><rect x="8" y="3" width="7" height="7" fill="#f6cf8a"/><rect x="2" y="8" width="7" height="7" fill="#d9c8f5"/><text x="3.5" y="6" text-anchor="middle" font-family="Liberation Sans" font-size="6" fill="#444">D</text><text x="11.5" y="9" text-anchor="middle" font-family="Liberation Sans" font-size="6" fill="#444">L</text><text x="5.5" y="14" text-anchor="middle" font-family="Liberation Sans" font-size="6" fill="#444">S</text></svg>
<div style="position:absolute;left:1433px;top:1036px;width:1px;height:26px;background:#c9c9c9;"></div>
<svg style="position:absolute;left:1446px;top:1042px;" width="14" height="14" viewBox="0 0 14 14"><rect x="0" y="0" width="14" height="14" rx="2" fill="#d9c8f5"/><text x="7" y="11" text-anchor="middle" font-family="Liberation Sans" font-size="10" font-weight="bold" fill="#555">T</text></svg>
<div style="position:absolute;left:1460.00px;top:1043.00px;font-family:'Liberation Sans', sans-serif;font-size:13px;line-height:13px;color:#1f1f1f;font-weight:normal;font-style:normal;letter-spacing:-1.362px;white-space:pre;">:ON</div>
<svg style="position:absolute;left:1507px;top:1040px;" width="16" height="16" viewBox="0 0 16 16"><circle cx="11" cy="2.3" r="2" fill="#111"/><path d="M4 6 L8 4.5 L11 5.5 L9.5 10 L12.5 12.5 L11.5 15.5 M9.5 10 L6 13 L1.5 13.5 M8 4.5 L5.5 8 M11 5.5 L14 8.5" fill="none" stroke="#111" stroke-width="2" stroke-linecap="round"/></svg>
<div style="position:absolute;left:1522.00px;top:1043.00px;font-family:'Liberation Sans', sans-serif;font-size:13px;line-height:13px;color:#1f1f1f;font-weight:normal;font-style:normal;letter-spacing:-1.209px;white-space:pre;">ISolvables</div>
<div style="position:absolute;left:1583px;top:1036px;width:29px;height:26px;background:#b4b4b4;"></div>
<div style="position:absolute;left:1612px;top:1036px;width:16px;height:26px;background:#d6d6d6;"></div>
<div style="position:absolute;left:1586.00px;top:1041.75px;font-family:'Liberation Sans', sans-serif;font-size:14.5px;line-height:14.5px;color:#1f1f1f;font-weight:normal;font-style:normal;letter-spacing:0.111px;white-space:pre;">2333 of 8192M</div>
<svg style="position:absolute;left:471px;top:519px;" width="76" height="3.5" viewBox="0 0 76 3.5"><path d="M0 2.2 L1.5 0.6 L3 2.2 L4.5 0.6 L6 2.2 L7.5 0.6 L9 2.2 L10.5 0.6 L12 2.2 L13.5 0.6 L15 2.2 L16.5 0.6 L18 2.2 L19.5 0.6 L21 2.2 L22.5 0.6 L24 2.2 L25.5 0.6 L27 2.2 L28.5 0.6 L30 2.2 L31.5 0.6 L33 2.2 L34.5 0.6 L36 2.2 L37.5 0.6 L39 2.2 L40.5 0.6 L42 2.2 L43.5 0.6 L45 2.2 L46.5 0.6 L48 2.2 L49.5 0.6 L51 2.2 L52.5 0.6 L54 2.2 L55.5 0.6 L57 2.2 L58.5 0.6 L60 2.2 L61.5 0.6 L63 2.2 L64.5 0.6 L66 2.2 L67.5 0.6 L69 2.2 L70.5 0.6 L72 2.2 L73.5 0.6 L75 2.2" fill="none" stroke="#9a9a9a" stroke-width="0.9"/></svg>
<svg style="position:absolute;left:699px;top:519px;" width="71" height="3.5" viewBox="0 0 71 3.5"><path d="M0 2.2 L1.5 0.6 L3 2.2 L4.5 0.6 L6 2.2 L7.5 0.6 L9 2.2 L10.5 0.6 L12 2.2 L13.5 0.6 L15 2.2 L16.5 0.6 L18 2.2 L19.5 0.6 L21 2.2 L22.5 0.6 L24 2.2 L25.5 0.6 L27 2.2 L28.5 0.6 L30 2.2 L31.5 0.6 L33 2.2 L34.5 0.6 L36 2.2 L37.5 0.6 L39 2.2 L40.5 0.6 L42 2.2 L43.5 0.6 L45 2.2 L46.5 0.6 L48 2.2 L49.5 0.6 L51 2.2 L52.5 0.6 L54 2.2 L55.5 0.6 L57 2.2 L58.5 0.6 L60 2.2 L61.5 0.6 L63 2.2 L64.5 0.6 L66 2.2 L67.5 0.6 L69 2.2" fill="none" stroke="#9a9a9a" stroke-width="0.9"/></svg>
<div style="position:absolute;left:1662px;top:394px;width:10px;height:21px;background:#e3e1d3;"></div>
</body></html>
